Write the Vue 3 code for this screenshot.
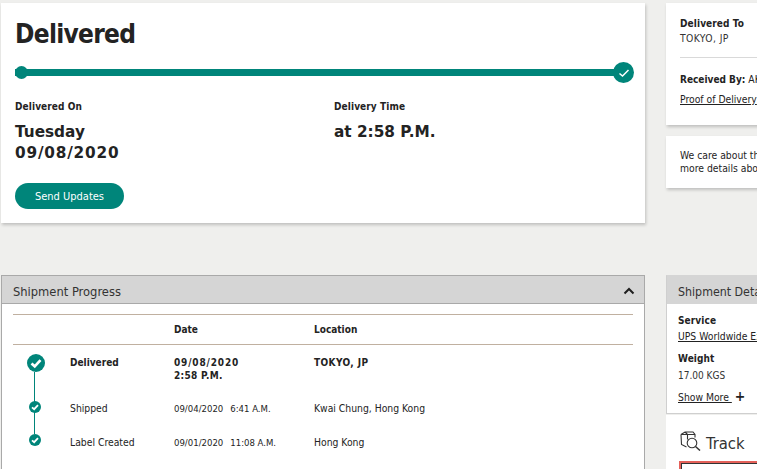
<script setup>
const steps = [
  { name: 'Delivered', date: '09/08/2020', time: '2:58 P.M.', place: 'TOKYO, JP', main: true },
  { name: 'Shipped', date: '09/04/2020', time: '6:41 A.M.', place: 'Kwai Chung, Hong Kong' },
  { name: 'Label Created', date: '09/01/2020', time: '11:08 A.M.', place: 'Hong Kong' }
]
</script>

<template>
  <div class="page">
    <div class="left">
      <section class="card hero">
        <h1>Delivered</h1>
        <div class="bar">
          <span class="dot"></span>
          <span class="end">
            <svg width="12" height="10" viewBox="0 0 12 10"><path d="M1.5 5.5 4.5 8 10.5 2" fill="none" stroke="#fff" stroke-width="1.5"/></svg>
          </span>
        </div>
        <div class="facts">
          <div class="fact">
            <div class="label">Delivered On</div>
            <div class="value">Tuesday<br><span class="num">09/08/2020</span></div>
          </div>
          <div class="fact">
            <div class="label">Delivery Time</div>
            <div class="value">at 2:58 P.M.</div>
          </div>
        </div>
        <button class="send">Send Updates</button>
      </section>

      <section class="panel progress">
        <header class="head">
          <span>Shipment Progress</span>
          <svg width="12" height="8" viewBox="0 0 12 8"><path d="M1.5 6.5 6 2l4.5 4.5" fill="none" stroke="#1f1f1f" stroke-width="2"/></svg>
        </header>
        <div class="table">
          <div class="row titles">
            <span class="mark"></span><span class="name"></span>
            <span class="date">Date</span><span class="place">Location</span>
          </div>
          <div class="rows">
            <span class="line"></span>
            <div v-for="s in steps" :key="s.name" class="row step" :class="{ main: s.main }">
              <span class="mark">
                <svg :width="s.main ? 18 : 12" :height="s.main ? 18 : 12" viewBox="0 0 20 20">
                  <circle cx="10" cy="10" r="10" fill="#00857a"/>
                  <path d="M5 10.5 8.6 13.7 15 6.8" fill="none" stroke="#fff" stroke-width="3"/>
                </svg>
              </span>
              <span class="name">{{ s.name }}</span>
              <span class="date" v-if="s.main"><span class="num-sm">{{ s.date }}</span><br>{{ s.time }}</span>
              <span class="date" v-else><span class="d">{{ s.date }}</span>{{ s.time }}</span>
              <span class="place">{{ s.place }}</span>
            </div>
          </div>
        </div>
      </section>
    </div>

    <div class="right">
      <section class="card to">
        <div class="label">Delivered To</div>
        <div class="city">TOKYO, JP</div>
        <hr>
        <div class="recv"><b>Received By:</b> AKIYAMA</div>
        <a class="link">Proof of Delivery</a>
      </section>
      <section class="card care">
        We care about the security of your package. Please see<br>more details about our delivery services in your area.
      </section>

      <section class="panel details">
        <header class="head"><span>Shipment Details</span></header>
        <div class="body">
          <div class="label">Service</div>
          <a class="link">UPS Worldwide Express</a>
          <div class="label w">Weight</div>
          <div class="city">17.00 KGS</div>
          <a class="more"><span>Show More&nbsp;</span><b>+</b></a>
        </div>
      </section>
      <section class="track">
        <div class="track-title">
          <svg width="21" height="20" viewBox="0 0 21 20" fill="none" stroke="#333" stroke-width="1.1">
            <path d="M1 3.5 5 1h8l2 2.5v3M1 3.5h6.5L15 3.5M1 3.5l.5 10 5 2.5M7.5 3.5v5M5 1 7.500 3.500"/>
            <circle cx="12" cy="12" r="4.800"/>
            <path d="m15.500 15.500 4.500 4" stroke-width="1.500"/>
          </svg>
          <span class="track-name">Track</span>
        </div>
        <div class="input"></div>
      </section>
    </div>
  </div>
</template>

<style>
html, body { margin: 0; height: 100%; overflow: hidden; background: #efefed; }
</style>

<style scoped>
.page {
  display: grid;
  grid-template-columns: 644px 300px;
  column-gap: 21px;
  width: 965px;
  height: 466px;
  overflow: hidden;
  padding: 3px 0 0 1px;
  font-family: "DejaVu Sans", sans-serif;
  font-stretch: condensed;
  font-size: 10.3px;
  color: #232323;
}
.card { background: #fff; box-shadow: 1px 2px 3px rgba(0,0,0,.2); }
.hero { height: 220px; padding: 17px 11px 0 14px; box-sizing: border-box; }
h1 { margin: 0; font-size: 26px; line-height: 28px; font-weight: 700; letter-spacing: -.7px; }
.bar { position: relative; height: 7px; margin: 21px 0 0; background: #00857a; width: 607px; }
.dot { position: absolute; left: 0; top: -3px; width: 13px; height: 13px; border-radius: 50%; background: #00857a; }
.end { position: absolute; right: -12px; top: -7px; width: 21px; height: 21px; border-radius: 50%; background: #00857a; display: flex; align-items: center; justify-content: center; }
.facts { display: grid; grid-template-columns: 319px 1fr; margin-top: 24px; }
.label { font-weight: 700; font-size: 10px; line-height: 14px; color: #232323; letter-spacing: .1px; }
.value { margin-top: 8px; font-weight: 700; font-stretch: normal; font-size: 15.3px; line-height: 21px; }
.num { letter-spacing: .8px; }
.send { display: block; margin-top: 19px; width: 109px; height: 26px; border: 0; border-radius: 13px; background: #00857a; color: #fff; font: inherit; font-stretch: condensed; font-size: 11px; padding: 0; }

.panel { background: #fff; border-style: solid; border-color: #a9a9a9; border-width: 1px; box-sizing: border-box; }
.head { height: 28px; box-sizing: border-box; background: #d5d5d5; border-bottom: 1px solid #a9a9a9; display: flex; align-items: center; justify-content: space-between; padding: 3px 9px 0 11px; font-size: 12.8px; color: #333; }
.progress { margin-top: 52px; height: 200px; border-bottom: 0; }
.table { margin: 10px 11px 0 11px; border-top: 1px solid #c0b0a0; }
.row { display: grid; grid-template-columns: 57px 104px 140px 1fr; }
.titles { height: 30px; box-sizing: border-box; align-items: center; font-weight: 700; font-size: 10px; border-bottom: 1px solid #c0b0a0; }
.rows { position: relative; }
.line { position: absolute; left: 21px; top: 27px; width: 1px; height: 62px; background: #00857a; }
.step { height: 34px; padding-top: 10px; box-sizing: border-box; line-height: 13px; position: relative; }
.step.main { height: 47px; padding-top: 11px; font-weight: 700; font-size: 10px; }
.step.main .date .num-sm { letter-spacing: .85px; }
.mark { display: flex; justify-content: center; width: 44px; position: relative; align-items: flex-start; margin-top: -1px; }
.step.main .mark { width: 46px; margin-top: -2px; }
.step:last-child .mark { margin-top: -2px; }
.d { margin-right: 7px; }
.step .date { font-size: 9.5px; }
.step.main .date { font-size: 10px; letter-spacing: .3px; }
.step.main .place { letter-spacing: .4px; }
.to { height: 122px; padding: 14px; box-sizing: border-box; }
.to .city { letter-spacing: .4px; }
.city { line-height: 15px; color: #333; }
.to hr { border: 0; border-top: 1px solid #d9d9d9; margin: 11px 0 14px; }
.recv { line-height: 14px; margin-bottom: 5px; }
.recv b { font-size: 10px; }
.link { color: #222; text-decoration: underline; line-height: 14px; display: block; white-space: nowrap; }
.care { height: 52px; margin-top: 11px; padding: 13px 14px; box-sizing: border-box; line-height: 13px; white-space: nowrap; }
.right { display: flex; flex-direction: column; }
.details { height: 139px; margin-top: 87px; border-color: #cfcfcf; border-top-color: #d5d5d5; border-right: 0; flex: none; }
.details .head { border-bottom: 0; padding-left: 11px; height: 28px; font-size: 12.3px; }
.details .body { padding: 9px 11px; }
.details .label { line-height: 15px; }
.details .link { margin-top: 1px; }
.w { margin-top: 8px; }
.details .city { margin-top: 2px; font-size: 10px; }
.more { display: block; margin-top: 7px; }
.more span { text-decoration: underline; }
.more b { font-size: 14px; line-height: 12px; margin-left: 3px; }
.track { background: #fff; height: 100px; flex: none; padding: 16px 13px; box-sizing: border-box; margin-top: 1px; }
.track-title { display: flex; align-items: center; gap: 5px; height: 20px; padding-left: 1px; font-size: 16.5px; color: #333; }
.track-name { margin-top: 4px; }
.input { margin-top: 12px; height: 40px; border: 1px solid #333; box-shadow: 0 0 0 2px #e5615a; margin-left: 2px; }
</style>
